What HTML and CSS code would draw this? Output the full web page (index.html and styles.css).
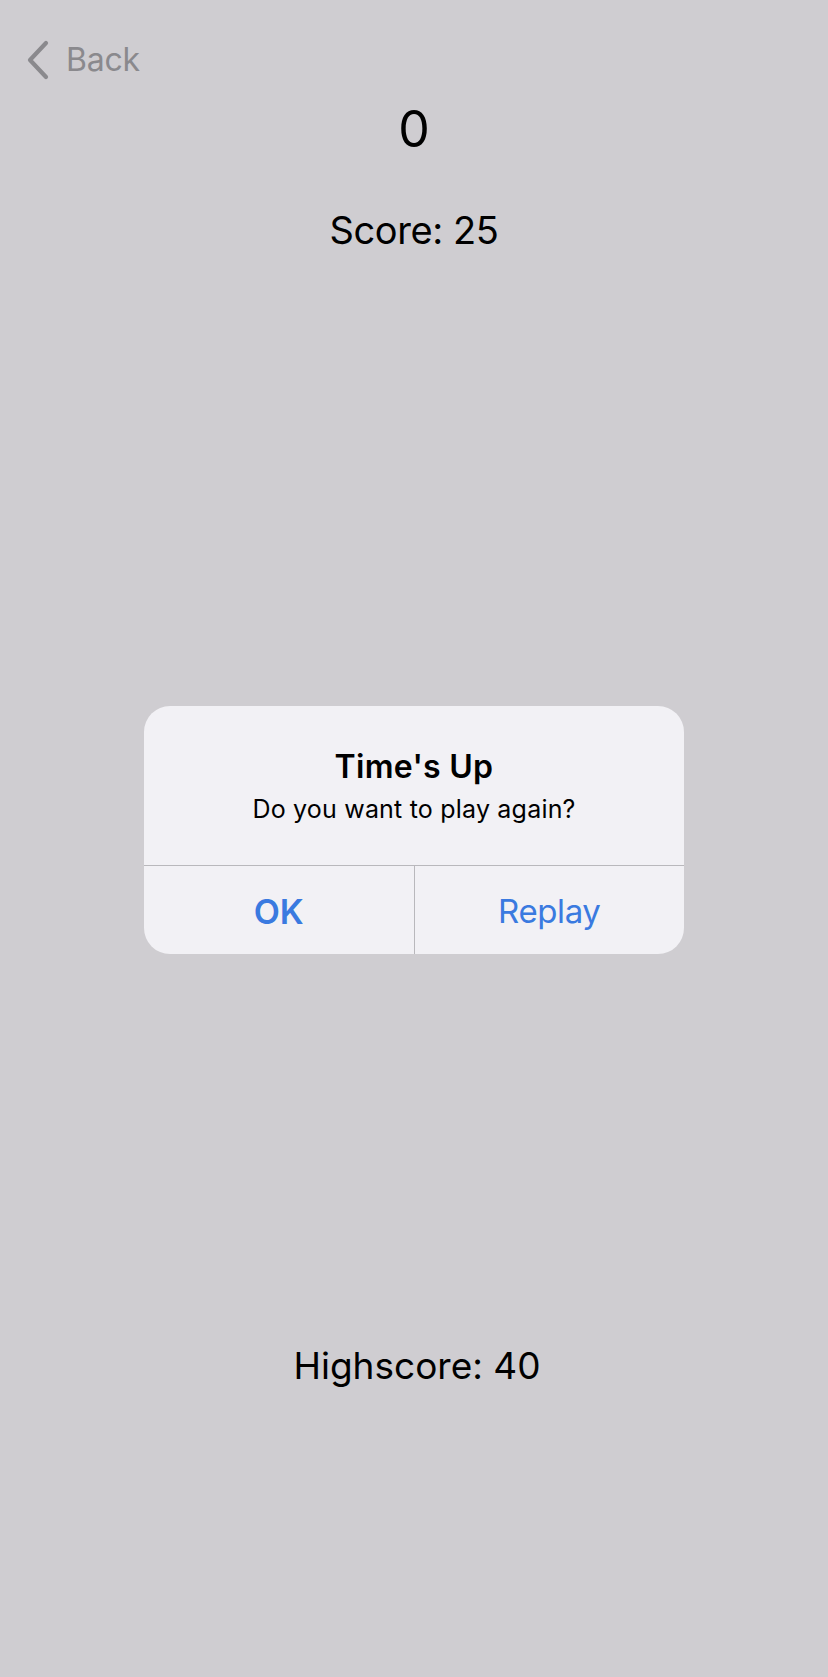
FILE: index.html
```html
<!DOCTYPE html>
<html>
<head>
<meta charset="utf-8">
<link rel="stylesheet" href="styles.css">
</head>
<body>
<div class="screen">
  <div class="nav">
    <svg class="chev" width="26" height="40" viewBox="0 0 26 40"><path d="M21 3 L5 20 L21 37" fill="none" stroke="#8a898d" stroke-width="4.2" stroke-linecap="round" stroke-linejoin="round"/></svg>
    <span class="back">Back</span>
  </div>
  <div class="timer">0</div>
  <div class="score">Score: 25</div>
  <div class="spacer"></div>
  <div class="high">Highscore: 40</div>

  <div class="alert">
    <div class="alert-body">
      <div class="alert-title">Time's Up</div>
      <div class="alert-msg">Do you want to play again?</div>
    </div>
    <div class="alert-actions">
      <div class="btn btn-ok">OK</div>
      <div class="btn btn-replay">Replay</div>
    </div>
  </div>
</div>
</body>
</html>
```
FILE: styles.css
```css
html, body {
  margin: 0;
  padding: 0;
  background: #cfcdd1;
}
.screen {
  position: relative;
  width: 828px;
  height: 1677px;
  display: flex;
  flex-direction: column;
  font-family: Inter, "Noto Sans", sans-serif;
  color: #000;
}
.nav {
  display: flex;
  align-items: center;
  height: 40px;
  margin-top: 40px;
  padding-left: 25px;
  gap: 15px;
}
.chev { display: block; }
.back {
  font-size: 32px;
  line-height: 40px;
  color: #8a898d;
  letter-spacing: -0.2px;
}
.timer {
  text-align: center;
  font-size: 50px;
  line-height: 60px;
  margin-top: 19px;
}
.score {
  text-align: center;
  font-size: 38px;
  line-height: 48px;
  margin-top: 47px;
  letter-spacing: -0.4px;
}
.spacer { flex: 0 0 1089px; }
.high {
  text-align: center;
  font-size: 37px;
  line-height: 45px;
  padding-left: 6px;
}
.alert {
  position: absolute;
  left: 144px;
  top: 706px;
  width: 540px;
  height: 248px;
  background: #f2f1f5;
  border-radius: 26px;
  display: flex;
  flex-direction: column;
  overflow: hidden;
}
.alert-body {
  height: 160px;
  box-sizing: border-box;
  padding-top: 41px;
  text-align: center;
  border-bottom: 1px solid #b9b8bc;
}
.alert-title {
  font-size: 32px;
  font-weight: 600;
  line-height: 39px;
  letter-spacing: 0.3px;
}
.alert-msg {
  font-size: 25px;
  line-height: 30px;
  margin-top: 8px;
  letter-spacing: 0.2px;
}
.alert-actions {
  flex: 1;
  display: flex;
}
.btn {
  flex: 1;
  display: flex;
  align-items: center;
  justify-content: center;
  font-size: 34px;
  color: #3a7ae0;
  padding-top: 2px;
}
.btn-ok {
  font-weight: 600;
  border-right: 1px solid #b9b8bc;
}
.btn-replay {
  font-size: 33px;
  letter-spacing: -0.4px;
}
```
